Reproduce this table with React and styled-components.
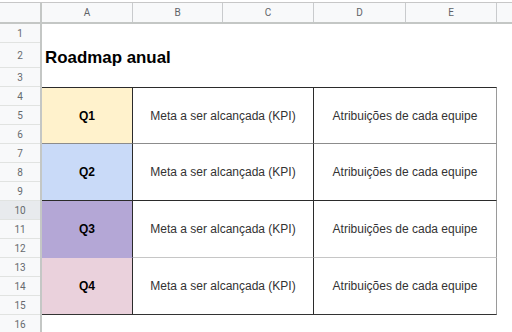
import React from "react";
import styled, { createGlobalStyle } from "styled-components";

const GlobalStyle = createGlobalStyle`
  html, body {
    margin: 0;
    padding: 0;
    background: #ffffff;
    width: 512px;
    height: 332px;
    overflow: hidden;
  }
  * {
    box-sizing: border-box;
  }
`;

const COLS = [
  { name: "A", width: 91 },
  { name: "B", width: 90 },
  { name: "C", width: 91 },
  { name: "D", width: 92 },
  { name: "E", width: 91 },
];

const ROW_HEIGHTS = [19, 25, 19, 19, 19, 19, 19, 19, 19, 19, 19, 19, 19, 19, 19, 19];

const QUARTERS = [
  { label: "Q1", fill: "#fff2cc", bottom: "#8c8c8c", row: 4 },
  { label: "Q2", fill: "#c9daf8", bottom: "#2b2b2b", row: 7 },
  { label: "Q3", fill: "#b4a7d6", bottom: "#c6c6c6", row: 10, softA: true },
  { label: "Q4", fill: "#ead1dc", bottom: "#333333", row: 13 },
];

export default function App() {
  return (
    <>
      <GlobalStyle />
      <Sheet>
        <TopStrip />
        <HeaderRow>
          <Corner />
          {COLS.map((c) => (
            <ColHead key={c.name} $w={c.width}>
              {c.name}
            </ColHead>
          ))}
          <ColHead $grow />
        </HeaderRow>
        <Main>
          <RowHeads>
            {ROW_HEIGHTS.map((h, i) => (
              <RowNum key={i} $h={h} $active={i + 1 === 10}>
                {i + 1}
              </RowNum>
            ))}
          </RowHeads>
          <Grid>
            <Title>Roadmap anual</Title>
            {QUARTERS.map((q, i) => (
              <React.Fragment key={q.label}>
                <QCell
                  $row={q.row}
                  $fill={q.fill}
                  $bottom={q.softA ? q.fill : q.bottom}
                  $first={i === 0}
                >
                  {q.label}
                </QCell>
                <TextCell $row={q.row} $col="2 / 4" $bottom={q.bottom} $first={i === 0}>
                  Meta a ser alcançada (KPI)
                </TextCell>
                <TextCell $row={q.row} $col="4 / 6" $bottom={q.bottom} $first={i === 0} $last>
                  Atribuições de cada equipe
                </TextCell>
              </React.Fragment>
            ))}
          </Grid>
        </Main>
      </Sheet>
    </>
  );
}

const Sheet = styled.div`
  width: 512px;
  height: 332px;
  display: flex;
  flex-direction: column;
  overflow: hidden;
  background: #ffffff;
`;

const TopStrip = styled.div`
  height: 3px;
  flex: none;
  background: #ffffff;
  border-bottom: 1px solid #c7c7c7;
`;

const HeaderRow = styled.div`
  height: 21px;
  flex: none;
  display: flex;
  background: #f8f9fa;
  border-bottom: 2px solid #c4c7c5;
`;

const Corner = styled.div`
  width: 42px;
  flex: none;
  border-right: 2px solid #c4c7c5;
`;

const ColHead = styled.div`
  width: ${(p) => (p.$grow ? "auto" : `${p.$w}px`)};
  flex: ${(p) => (p.$grow ? "1" : "none")};
  display: flex;
  align-items: center;
  justify-content: center;
  border-right: ${(p) => (p.$grow ? "none" : "1px solid #c9cbcd")};
  font-family: Roboto, "Liberation Sans", sans-serif;
  font-size: 10px;
  color: #5f6368;
`;

const Main = styled.div`
  flex: 1;
  display: flex;
  min-height: 0;
`;

const RowHeads = styled.div`
  width: 42px;
  flex: none;
  display: flex;
  flex-direction: column;
  background: #f8f9fa;
  border-right: 2px solid #c4c7c5;
`;

const RowNum = styled.div`
  height: ${(p) => p.$h}px;
  flex: none;
  display: flex;
  align-items: center;
  justify-content: center;
  background: ${(p) => (p.$active ? "#e8eaed" : "transparent")};
  border-bottom: 1px solid #e1e3e1;
  font-family: Roboto, "Liberation Sans", sans-serif;
  font-size: 10px;
  color: #666a6e;
`;

const Grid = styled.div`
  flex: 1;
  display: grid;
  grid-template-columns: 91px 90px 91px 92px 91px 1fr;
  grid-template-rows: ${ROW_HEIGHTS.map((h) => `${h}px`).join(" ")};
  align-content: start;
`;

const Title = styled.div`
  grid-column: 1 / 6;
  grid-row: 2;
  display: flex;
  align-items: flex-end;
  padding: 0 0 1px 3px;
  font-family: "Liberation Sans", Arial, sans-serif;
  font-weight: bold;
  font-size: 16.9px;
  line-height: 19px;
  color: #000000;
`;

const BaseCell = styled.div`
  grid-row: ${(p) => p.$row} / span 3;
  display: flex;
  align-items: center;
  justify-content: center;
  font-family: "Liberation Sans", Arial, sans-serif;
  font-size: 12px;
  border-top: ${(p) => (p.$first ? "1px solid #2b2b2b" : "none")};
  border-bottom: 1px solid ${(p) => p.$bottom};
`;

const QCell = styled(BaseCell)`
  grid-column: 1;
  background: ${(p) => p.$fill};
  border-right: 1px solid #2b2b2b;
  font-weight: bold;
  color: #000000;
`;

const TextCell = styled(BaseCell)`
  grid-column: ${(p) => p.$col};
  background: #ffffff;
  border-right: 1px solid ${(p) => (p.$last ? "#9a9a9a" : "#2b2b2b")};
  color: #333333;
`;
